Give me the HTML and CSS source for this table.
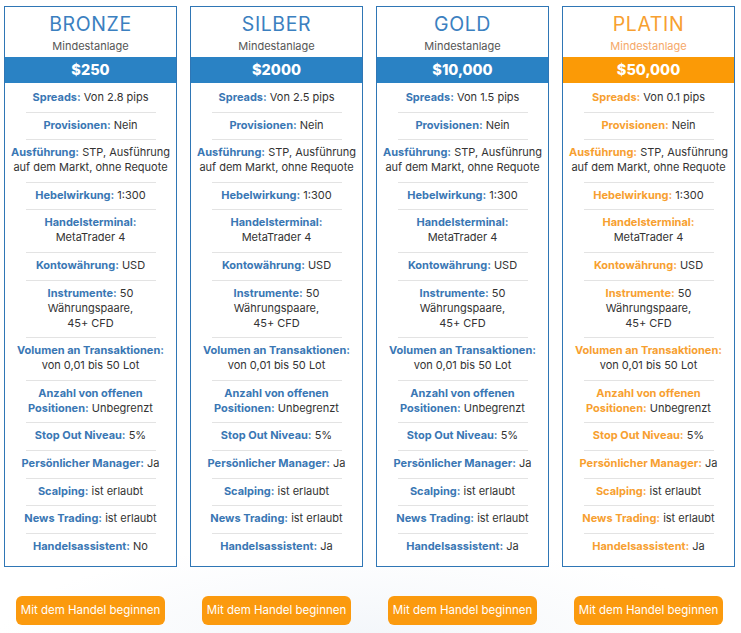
FILE: index.html
```html
<!DOCTYPE html>
<html lang="de">
<head>
<meta charset="utf-8">
<title>Kontotypen</title>
<link rel="stylesheet" href="styles.css">
</head>
<body>
<div class="page">
  <div class="plans">
    <section class="card">
      <header class="card-head">
        <h2 class="title">BRONZE</h2>
        <p class="sub">Mindestanlage</p>
      </header>
      <div class="price">$250</div>
      <ul class="features">
        <li><b>Spreads:</b> Von 2.8 pips</li>
        <li><b>Provisionen:</b> Nein</li>
        <li><b>Ausführung:</b> STP, Ausführung<br>auf dem Markt, ohne Requote</li>
        <li><b>Hebelwirkung:</b> 1:300</li>
        <li><b>Handelsterminal:</b><br>MetaTrader 4</li>
        <li><b>Kontowährung:</b> USD</li>
        <li><b>Instrumente:</b> 50<br>Währungspaare,<br>45+ CFD</li>
        <li><b>Volumen an Transaktionen:</b><br>von 0,01 bis 50 Lot</li>
        <li><b>Anzahl von offenen<br>Positionen:</b> Unbegrenzt</li>
        <li><b>Stop Out Niveau:</b> 5%</li>
        <li><b>Persönlicher Manager:</b> Ja</li>
        <li><b>Scalping:</b> ist erlaubt</li>
        <li><b>News Trading:</b> ist erlaubt</li>
        <li><b>Handelsassistent:</b> No</li>
      </ul>
    </section>
    <section class="card">
      <header class="card-head">
        <h2 class="title">SILBER</h2>
        <p class="sub">Mindestanlage</p>
      </header>
      <div class="price">$2000</div>
      <ul class="features">
        <li><b>Spreads:</b> Von 2.5 pips</li>
        <li><b>Provisionen:</b> Nein</li>
        <li><b>Ausführung:</b> STP, Ausführung<br>auf dem Markt, ohne Requote</li>
        <li><b>Hebelwirkung:</b> 1:300</li>
        <li><b>Handelsterminal:</b><br>MetaTrader 4</li>
        <li><b>Kontowährung:</b> USD</li>
        <li><b>Instrumente:</b> 50<br>Währungspaare,<br>45+ CFD</li>
        <li><b>Volumen an Transaktionen:</b><br>von 0,01 bis 50 Lot</li>
        <li><b>Anzahl von offenen<br>Positionen:</b> Unbegrenzt</li>
        <li><b>Stop Out Niveau:</b> 5%</li>
        <li><b>Persönlicher Manager:</b> Ja</li>
        <li><b>Scalping:</b> ist erlaubt</li>
        <li><b>News Trading:</b> ist erlaubt</li>
        <li><b>Handelsassistent:</b> Ja</li>
      </ul>
    </section>
    <section class="card">
      <header class="card-head">
        <h2 class="title">GOLD</h2>
        <p class="sub">Mindestanlage</p>
      </header>
      <div class="price">$10,000</div>
      <ul class="features">
        <li><b>Spreads:</b> Von 1.5 pips</li>
        <li><b>Provisionen:</b> Nein</li>
        <li><b>Ausführung:</b> STP, Ausführung<br>auf dem Markt, ohne Requote</li>
        <li><b>Hebelwirkung:</b> 1:300</li>
        <li><b>Handelsterminal:</b><br>MetaTrader 4</li>
        <li><b>Kontowährung:</b> USD</li>
        <li><b>Instrumente:</b> 50<br>Währungspaare,<br>45+ CFD</li>
        <li><b>Volumen an Transaktionen:</b><br>von 0,01 bis 50 Lot</li>
        <li><b>Anzahl von offenen<br>Positionen:</b> Unbegrenzt</li>
        <li><b>Stop Out Niveau:</b> 5%</li>
        <li><b>Persönlicher Manager:</b> Ja</li>
        <li><b>Scalping:</b> ist erlaubt</li>
        <li><b>News Trading:</b> ist erlaubt</li>
        <li><b>Handelsassistent:</b> Ja</li>
      </ul>
    </section>
    <section class="card card-platin">
      <header class="card-head">
        <h2 class="title">PLATIN</h2>
        <p class="sub">Mindestanlage</p>
      </header>
      <div class="price">$50,000</div>
      <ul class="features">
        <li><b>Spreads:</b> Von 0.1 pips</li>
        <li><b>Provisionen:</b> Nein</li>
        <li><b>Ausführung:</b> STP, Ausführung<br>auf dem Markt, ohne Requote</li>
        <li><b>Hebelwirkung:</b> 1:300</li>
        <li><b>Handelsterminal:</b><br>MetaTrader 4</li>
        <li><b>Kontowährung:</b> USD</li>
        <li><b>Instrumente:</b> 50<br>Währungspaare,<br>45+ CFD</li>
        <li><b>Volumen an Transaktionen:</b><br>von 0,01 bis 50 Lot</li>
        <li><b>Anzahl von offenen<br>Positionen:</b> Unbegrenzt</li>
        <li><b>Stop Out Niveau:</b> 5%</li>
        <li><b>Persönlicher Manager:</b> Ja</li>
        <li><b>Scalping:</b> ist erlaubt</li>
        <li><b>News Trading:</b> ist erlaubt</li>
        <li><b>Handelsassistent:</b> Ja</li>
      </ul>
    </section>

    <div class="cta"><a class="btn" href="#">Mit dem Handel beginnen</a></div>
    <div class="cta"><a class="btn" href="#">Mit dem Handel beginnen</a></div>
    <div class="cta"><a class="btn" href="#">Mit dem Handel beginnen</a></div>
    <div class="cta"><a class="btn" href="#">Mit dem Handel beginnen</a></div>
  </div>
</div>
</body>
</html>
```
FILE: styles.css
```css
* { box-sizing: border-box; }
html, body { margin: 0; padding: 0; }
body {
  font-family: Inter, "Noto Sans", sans-serif;
  color: #333;
  background: #fff;
  width: 741px;
  height: 633px;
  overflow: hidden;
}
.page {
  padding: 6px 6px 0 4px;
  background:
    radial-gradient(ellipse 520px 140px at 360px 640px, #f3f6fa 0%, rgba(243,246,250,0) 70%);
  min-height: 633px;
}
.plans {
  display: grid;
  grid-template-columns: repeat(4, 173px);
  column-gap: 13px;
  row-gap: 29px;
}
.card {
  border: 1px solid #2f76b5;
  background: #fff;
  display: flex;
  flex-direction: column;
}
.card-head {
  text-align: center;
  padding: 6px 0 4px;
}
.title {
  margin: 0;
  font-size: 19.5px;
  line-height: 22px;
  font-weight: 400;
  color: #3b80c0;
  letter-spacing: 0.6px;
}
.sub {
  margin: 4px 0 0;
  font-size: 11px;
  line-height: 14px;
  color: #555;
}
.price {
  background: #2a82c4;
  color: #fff;
  text-align: center;
  font-size: 14.5px;
  font-weight: 800;
  line-height: 26px;
  height: 26px;
}
.features {
  list-style: none;
  margin: 0;
  padding: 2px 0 5px;
}
.features li {
  text-align: center;
  font-size: 11px;
  line-height: 15px;
  white-space: nowrap;
  padding: 5px 0 7.6px;
  background: linear-gradient(#e3e3e3, #e3e3e3) no-repeat center bottom / 130px 1px;
}
.features li:last-child { background: none; }
.features b {
  font-weight: 700;
  color: #3a77b4;
}
.card-platin .title,
.card-platin .features b { color: #f7a030; }
.card-platin .sub { color: #f5a868; }
.card-platin .price { background: #fb9a06; }

.cta {
  display: flex;
  justify-content: center;
}
.btn {
  display: block;
  width: 149px;
  height: 29px;
  line-height: 29px;
  text-align: center;
  background: #fb9a0e;
  color: #fff;
  border-radius: 6px;
  font-size: 11.5px;
  text-decoration: none;
}
```
